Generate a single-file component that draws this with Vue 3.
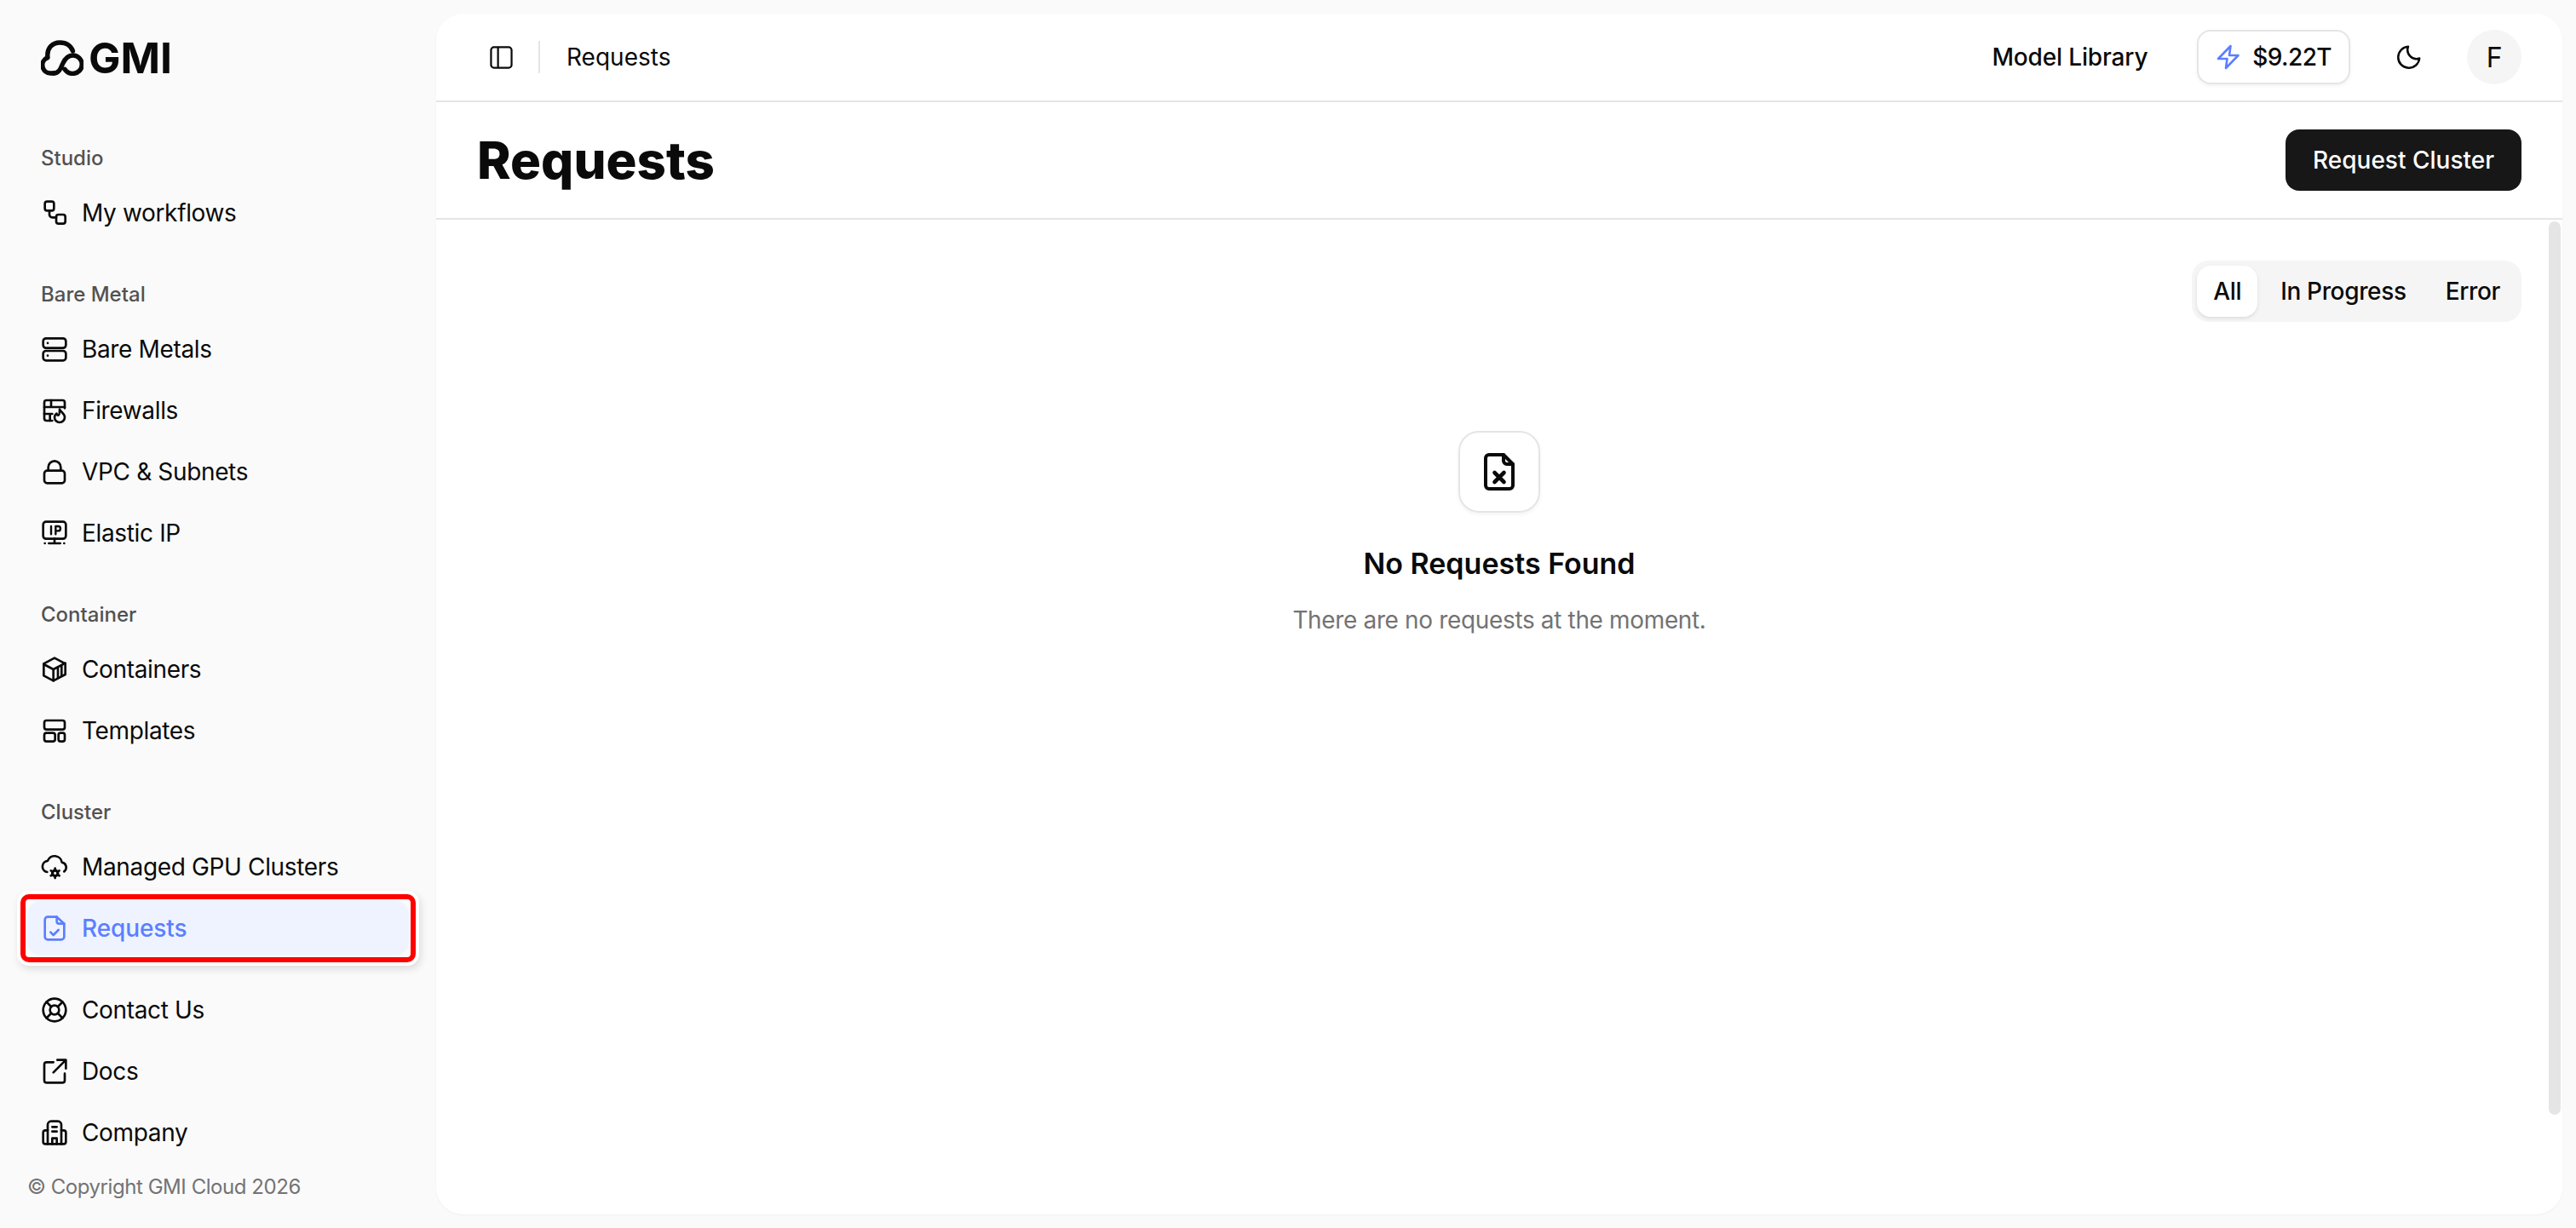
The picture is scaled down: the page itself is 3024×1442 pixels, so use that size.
<template>
  <div class="page">
    <aside class="sidebar">
      <div class="logo">
        <svg class="logo-mark" viewBox="0 0 50 42" fill="none" stroke="currentColor" stroke-width="5.4" stroke-linecap="round" stroke-linejoin="round">
          <path d="M15 39h-3.500a9.500 9.500 0 0 1-3.500-18.400C6.500 10 13 3 22.500 3c7.500 0 13 4 15 10" />
          <path d="M15 39c6 0 8-5 10.500-11 2.500-5.500 6-10 12-10a10.700 10.700 0 0 1 0 21.400c-4 0-7-1.500-9.500-5" />
        </svg>
        <span class="logo-text">GMI</span>
      </div>

      <nav class="nav">
        <section v-for="group in groups" :key="group.label" class="group">
          <div class="group-label">{{ group.label }}</div>
          <div class="items">
            <a v-for="item in group.items" :key="item.label" class="item" :class="{ active: item.active }">
              <svg class="icon" viewBox="0 0 24 24" fill="none" stroke="currentColor" stroke-width="2" stroke-linecap="round" stroke-linejoin="round" v-html="icons[item.icon]"></svg>
              <span>{{ item.label }}</span>
              <i v-if="item.active" class="marker"></i>
            </a>
          </div>
        </section>
      </nav>

      <div class="items bottom">
        <a v-for="item in footerItems" :key="item.label" class="item">
          <svg class="icon" viewBox="0 0 24 24" fill="none" stroke="currentColor" stroke-width="2" stroke-linecap="round" stroke-linejoin="round" v-html="icons[item.icon]"></svg>
          <span>{{ item.label }}</span>
        </a>
      </div>
      <div class="copyright">© Copyright GMI Cloud 2026</div>
    </aside>

    <main class="main">
      <header class="topbar">
        <svg class="toggle" viewBox="0 0 28 28" fill="none" stroke="currentColor" stroke-width="2.300">
          <rect x="1.500" y="1.500" width="25" height="25" rx="3.500" />
          <path d="M10 1.500v25" />
        </svg>
        <span class="divider"></span>
        <span class="crumb">Requests</span>
        <div class="top-right">
          <span class="model-link">Model Library</span>
          <button class="credit">
            <svg class="bolt" viewBox="0 0 28 30" fill="none" stroke="#5b7fff" stroke-width="2.600" stroke-linejoin="round">
              <path d="M16.500 2 2 17h10.500L11 28l14.500-15H15z" />
            </svg>
            <span>$9.22T</span>
          </button>
          <svg class="moon" viewBox="0 0 28 28" fill="none" stroke="currentColor" stroke-width="2.500" stroke-linecap="round" stroke-linejoin="round">
            <path d="M13 1.800a10.500 10.500 0 0 0 13.200 13.700A12.500 12.500 0 1 1 13 1.800z" />
          </svg>
          <span class="avatar">F</span>
        </div>
      </header>

      <div class="title-row">
        <h1>Requests</h1>
        <button class="primary">Request Cluster</button>
      </div>

      <div class="content">
        <div class="tabs-row">
          <div class="tabs">
            <span v-for="tab in tabs" :key="tab" class="tab" :class="{ on: tab === 'All' }">{{ tab }}</span>
          </div>
        </div>
        <div class="empty">
          <div class="empty-icon">
            <svg viewBox="0 0 36 44" fill="none" stroke="currentColor" stroke-width="4" stroke-linecap="round" stroke-linejoin="round">
              <path d="M23 2H6a4 4 0 0 0-4 4v32a4 4 0 0 0 4 4h24a4 4 0 0 0 4-4V13z" />
              <path d="M23 2v7a4 4 0 0 0 4 4h7" />
              <path d="m12.500 23 11 11M23.500 23l-11 11" stroke-width="4.600" />
            </svg>
          </div>
          <h2>No Requests Found</h2>
          <p>There are no requests at the moment.</p>
        </div>
        <div class="scroll-thumb"></div>
      </div>
    </main>
  </div>
</template>

<script setup>
const icons = {
  workflow: '<rect x="3.500" y="2" width="8" height="8" rx="2"/><rect x="13.500" y="13.500" width="8" height="8" rx="2"/><path d="M7.500 10v3.500a2.500 2.500 0 0 0 2.500 2.500h3.500"/>',
  server: '<rect x="2" y="2.500" width="20" height="8.500" rx="2.500"/><rect x="2" y="13.500" width="20" height="8.500" rx="2.500"/><path d="M6 6.700h.01M6 17.700h.01"/>',
  firewall: '<path d="M10 21H5a2 2 0 0 1-2-2V5a2 2 0 0 1 2-2h14a2 2 0 0 1 2 2v5"/><path d="M3 9h18M9 3v6M3 15h7M8 15v6"/><path d="M16.500 11c.5 2 4.500 3.500 4.500 7a4.500 4.500 0 0 1-9 0c0-1.500.8-2.600 1.800-3.300.2 1 .8 1.500 1.400 1.500 1 0 1.300-2.700 1.300-5.200z"/>',
  lock: '<rect x="3" y="11" width="18" height="11" rx="2.500"/><path d="M6.500 11V8a5.500 5.500 0 0 1 11 0v3"/>',
  ip: '<rect x="2" y="2" width="20" height="15" rx="2.500"/><path d="M9 6v7M13 13V6h2.200a2 2 0 0 1 0 4H13" stroke-width="1.800"/><path d="M12 17v4M3.500 21h.01M7 21h10M20.500 21h.01"/>',
  container: '<path d="M12 2 2.500 7v10.500L11 22l10.500-5.500V7z"/><path d="M2.500 7.500 11 12l10.500-5.500M11 12v10M15 10v9.500M18.200 8.500v9"/>',
  template: '<rect x="3" y="3" width="18" height="8" rx="2"/><rect x="3" y="14" width="9.500" height="7.500" rx="2"/><rect x="15.500" y="14" width="5.500" height="7.500" rx="1.800"/>',
  cloud: '<path d="M5.500 16.500A5 5 0 0 1 6 6.600 6.500 6.500 0 0 1 18.500 8a4.500 4.500 0 0 1 2 8"/><circle cx="12.500" cy="17.500" r="2.400" stroke-width="2.400"/><path d="M12.500 13.200v1M12.500 20.800v1M8.800 15.300l.9.500M15.300 19.200l.9.500M8.800 19.700l.9-.5M15.300 15.800l.9-.5" stroke-width="2"/>',
  fileCheck: '<path d="M14 2H6a2.500 2.500 0 0 0-2.500 2.500v15A2.500 2.500 0 0 0 6 22h12a2.500 2.500 0 0 0 2.500-2.500V8z"/><path d="M14 2v4a2 2 0 0 0 2 2h4.500"/><path d="m8.500 15.500 2.500 2.500 4.500-4.500"/>',
  lifebuoy: '<circle cx="12" cy="12" r="10"/><circle cx="12" cy="12" r="4"/><path d="m4.900 4.900 4.300 4.300M14.800 14.800l4.300 4.300M14.800 9.200l4.300-4.300M4.900 19.100l4.300-4.300"/>',
  external: '<path d="M11 4H5a2 2 0 0 0-2 2v14a2 2 0 0 0 2 2h14a2 2 0 0 0 2-2v-6"/><path d="M14.500 2H22v7.500M22 2 11 13"/>',
  building: '<path d="M6 22V5a3 3 0 0 1 3-3h6a3 3 0 0 1 3 3v17"/><path d="M6 10H4a2 2 0 0 0-2 2v8a2 2 0 0 0 2 2h16a2 2 0 0 0 2-2v-8a2 2 0 0 0-2-2h-2"/><path d="M10 7h4M10 11h4M10 22v-5h4v5"/>'
}

const groups = [
  { label: 'Studio', items: [{ label: 'My workflows', icon: 'workflow' }] },
  {
    label: 'Bare Metal',
    items: [
      { label: 'Bare Metals', icon: 'server' },
      { label: 'Firewalls', icon: 'firewall' },
      { label: 'VPC & Subnets', icon: 'lock' },
      { label: 'Elastic IP', icon: 'ip' }
    ]
  },
  {
    label: 'Container',
    items: [
      { label: 'Containers', icon: 'container' },
      { label: 'Templates', icon: 'template' }
    ]
  },
  {
    label: 'Cluster',
    items: [
      { label: 'Managed GPU Clusters', icon: 'cloud' },
      { label: 'Requests', icon: 'fileCheck', active: true }
    ]
  }
]

const footerItems = [
  { label: 'Contact Us', icon: 'lifebuoy' },
  { label: 'Docs', icon: 'external' },
  { label: 'Company', icon: 'building' }
]

const tabs = ['All', 'In Progress', 'Error']
</script>

<style>
html,
body {
  margin: 0;
  background: #fafafa;
  overflow: hidden;
}
</style>

<style scoped>
.page {
  display: flex;
  height: 1442px;
  background: #fafafa;
  color: #0a0a0a;
  font-family: Inter, "Liberation Sans", sans-serif;
  font-size: 28px;
  letter-spacing: -0.35px;
}

.sidebar {
  width: 512px;
  flex-shrink: 0;
  box-sizing: border-box;
  padding: 0 32px;
  display: flex;
  flex-direction: column;
}

.logo {
  height: 162px;
  box-sizing: border-box;
  padding: 47px 0 0 16px;
  display: flex;
  align-items: flex-start;
  gap: 6px;
}

.logo-mark {
  width: 50px;
  height: 42px;
}

.logo-text {
  font-size: 50px;
  line-height: 42px;
  font-weight: 700;
  letter-spacing: 0;
}

.nav {
  display: flex;
  flex-direction: column;
  gap: 40px;
}

.group-label {
  height: 48px;
  line-height: 48px;
  padding-left: 16px;
  margin-bottom: 8px;
  font-size: 24px;
  font-weight: 500;
  letter-spacing: 0;
  color: #525252;
}

.items {
  display: flex;
  flex-direction: column;
  gap: 8px;
}

.item {
  position: relative;
  height: 64px;
  display: flex;
  align-items: center;
  gap: 16px;
  padding-left: 16px;
  border-radius: 16px;
}

.item.active {
  background: #eef3ff;
  color: #5b7fff;
  font-weight: 500;
  letter-spacing: -0.1px;
}

.marker {
  position: absolute;
  inset: -8px;
  border: 6px solid #ff0000;
  border-radius: 10px;
  box-shadow: 0 0 0 4px #fff, 2px 4px 10px 4px rgba(0, 0, 0, 0.12);
}

.icon {
  width: 32px;
  height: 32px;
  flex-shrink: 0;
}

.bottom {
  margin-top: 32px;
}

.copyright {
  margin-top: 16px;
  font-size: 24px;
  line-height: 32px;
  letter-spacing: -0.45px;
  color: #737373;
}

.main {
  position: relative;
  width: 2496px;
  height: 1410px;
  margin-top: 16px;
  background: #fff;
  border-radius: 32px;
  box-shadow: 0 1px 3px rgba(0, 0, 0, 0.04);
  display: flex;
  flex-direction: column;
  overflow: hidden;
}

.topbar {
  height: 102px;
  flex-shrink: 0;
  border-bottom: 2px solid #e5e5e5;
  display: flex;
  align-items: center;
  padding: 0 48px 0 63px;
}

.toggle {
  width: 27px;
  height: 27px;
}

.divider {
  width: 2px;
  height: 38px;
  margin: 0 31px 0 30px;
  background: #e5e5e5;
}

.crumb {
  letter-spacing: 0;
}

.top-right {
  margin-left: auto;
  display: flex;
  align-items: center;
}

.model-link {
  font-weight: 500;
  letter-spacing: -0.15px;
  margin-right: 58px;
}

.credit {
  height: 64px;
  box-sizing: border-box;
  display: flex;
  align-items: center;
  gap: 14px;
  padding: 0 20px 0 21px;
  border: 2px solid #e5e5e5;
  border-radius: 16px;
  background: #fff;
  box-shadow: 0 2px 4px rgba(0, 0, 0, 0.05);
  font: inherit;
  font-weight: 500;
  letter-spacing: -0.6px;
  color: inherit;
}

.bolt {
  width: 28px;
  height: 30px;
}

.moon {
  width: 28px;
  height: 28px;
  margin: 0 54px 0 55px;
}

.avatar {
  width: 64px;
  height: 64px;
  border-radius: 50%;
  background: #f5f5f5;
  font-size: 32px;
  display: flex;
  align-items: center;
  justify-content: center;
}

.title-row {
  height: 136px;
  flex-shrink: 0;
  border-bottom: 2px solid #e5e5e5;
  display: flex;
  align-items: center;
  justify-content: space-between;
  padding: 0 48px;
}

h1 {
  margin: 0;
  font-size: 60px;
  font-weight: 800;
  letter-spacing: 0;
}

.primary {
  height: 72px;
  padding: 0 32px;
  border: none;
  border-radius: 16px;
  background: #171717;
  color: #fff;
  font: inherit;
  font-weight: 500;
  letter-spacing: 0;
}

.content {
  position: relative;
  flex: 1;
  padding: 48px 48px 0;
}

.tabs-row {
  display: flex;
  justify-content: flex-end;
}

.tabs {
  height: 72px;
  box-sizing: border-box;
  padding: 6px;
  display: flex;
  align-items: center;
  gap: 8px;
  border-radius: 20px;
  background: #f5f5f5;
  font-weight: 500;
}

.tab {
  height: 60px;
  padding: 0 19px;
  display: flex;
  align-items: center;
  border-radius: 16px;
}

.tab.on {
  background: #fff;
  box-shadow: 0 2px 4px rgba(0, 0, 0, 0.1);
}

.empty {
  margin-top: 128px;
  display: flex;
  flex-direction: column;
  align-items: center;
}

.empty-icon {
  width: 96px;
  height: 96px;
  box-sizing: border-box;
  border: 2px solid #e5e5e5;
  border-radius: 24px;
  box-shadow: 0 2px 4px rgba(0, 0, 0, 0.05);
  display: flex;
  align-items: center;
  justify-content: center;
}

.empty-icon svg {
  width: 36px;
  height: 44px;
}

h2 {
  margin: 38px 0 0;
  font-size: 34px;
  line-height: 44px;
  font-weight: 600;
  letter-spacing: 0;
}

p {
  margin: 24px 0 0;
  line-height: 40px;
  color: #737373;
}

.scroll-thumb {
  position: absolute;
  top: 2px;
  right: 2px;
  width: 14px;
  height: 1049px;
  border-radius: 7px;
  background: #e5e5e5;
}
</style>
